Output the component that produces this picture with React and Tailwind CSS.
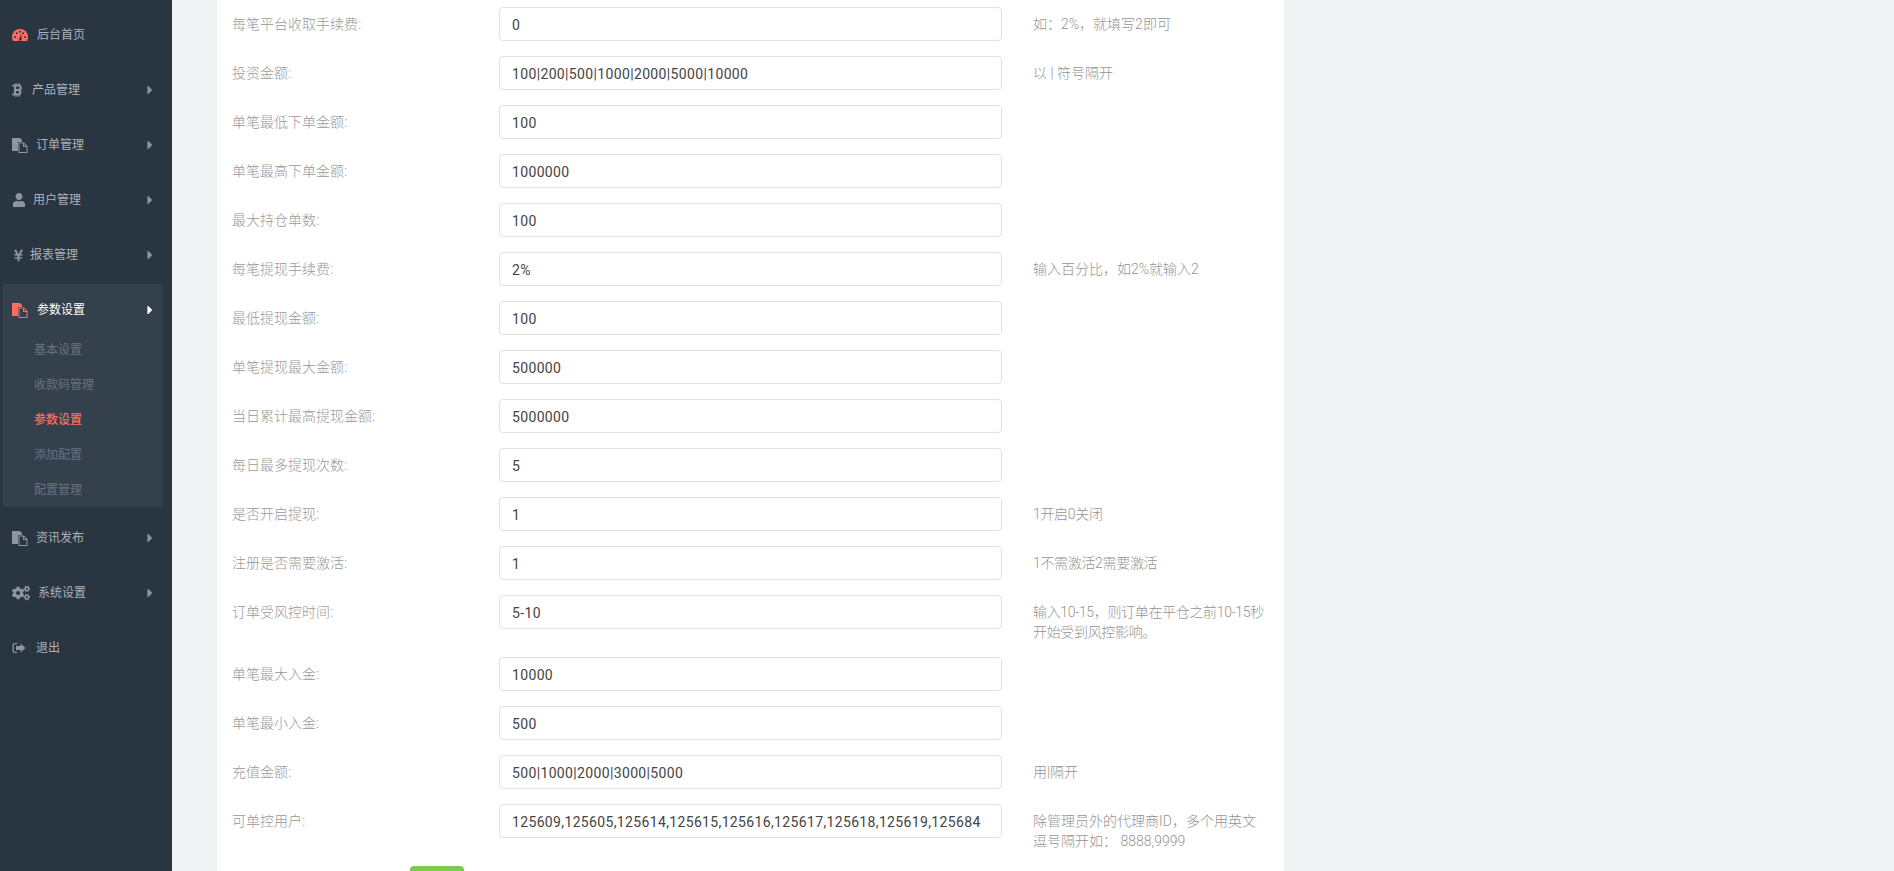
import { FaUser, FaYenSign, FaCogs, FaCaretRight } from "react-icons/fa";

const rows = [
  { label: "每笔平台收取手续费", value: "0", hint: "如：2%，就填写2即可" },
  { label: "投资金额", value: "100|200|500|1000|2000|5000|10000", hint: "以 | 符号隔开" },
  { label: "单笔最低下单金额", value: "100" },
  { label: "单笔最高下单金额", value: "1000000" },
  { label: "最大持仓单数", value: "100" },
  { label: "每笔提现手续费", value: "2%", hint: "输入百分比，如2%就输入2" },
  { label: "最低提现金额", value: "100" },
  { label: "单笔提现最大金额", value: "500000" },
  { label: "当日累计最高提现金额", value: "5000000" },
  { label: "每日最多提现次数", value: "5" },
  { label: "是否开启提现", value: "1", hint: "1开启0关闭", tight: true },
  { label: "注册是否需要激活", value: "1", hint: "1不需激活2需要激活", tight: true },
  { label: "订单受风控时间", value: "5-10", hint: "输入10-15，则订单在平仓之前10-15秒\n开始受到风控影响。", tight: true },
  { label: "单笔最大入金", value: "10000" },
  { label: "单笔最小入金", value: "500" },
  { label: "充值金额", value: "500|1000|2000|3000|5000", hint: "用|隔开" },
  {
    label: "可单控用户",
    value: "125609,125605,125614,125615,125616,125617,125618,125619,125684",
    hint: "除管理员外的代理商ID，多个用英文\n逗号隔开如： 8888,9999",
  },
];

function Gauge({ className }) {
  return (
    <svg viewBox="0 0 16 12" className={className} fill="currentColor">
      <path d="M8 0a8 8 0 0 0-8 8c0 1.500.4 2.900 1.100 4h13.800A8 8 0 0 0 16 8a8 8 0 0 0-8-8z" />
      <g fill="#2a3542">
        <circle cx="3" cy="8" r="1" />
        <circle cx="4.800" cy="4.200" r="1" />
        <circle cx="8" cy="2.800" r="1" />
        <circle cx="11.200" cy="4.200" r="1" />
        <circle cx="13" cy="8" r="1" />
        <path d="M7 10.500 9.200 5l.4 5.500a1.300 1.300 0 0 1-2.600 0z" />
      </g>
    </svg>
  );
}

function Bitcoin({ className }) {
  return (
    <svg viewBox="0 0 11 14" className={className} fill="none" stroke="currentColor">
      <path strokeWidth="2.200" d="M2.500 2.500h4a2.200 2.200 0 0 1 0 4.500h-4m4 0a2.300 2.300 0 0 1 0 4.500h-4M3 1.500v11" />
      <path strokeWidth="1.300" d="M4 0v2.500M7 0v2.500M4 11.500V14M7 11.500V14M0 2.500h2.500M0 11.500h2.500" />
    </svg>
  );
}

function Files({ className }) {
  return (
    <svg viewBox="0 0 16 15" className={className} fill="currentColor">
      <path d="M0 0h8l2 2v2H6v9H0z" />
      <path fillRule="evenodd" d="M6.500 4.500H12l3.500 3.500v7h-9zM7.500 5.500v8.500h7V9H11V5.500zM12 6v2h2z" />
    </svg>
  );
}

function SignOut({ className }) {
  return (
    <svg viewBox="0 0 14 12" className={className} fill="currentColor">
      <path d="M5 1H3a2.500 2.500 0 0 0-2.500 2.500v5A2.500 2.500 0 0 0 3 11h2V9.800H3A1.200 1.200 0 0 1 1.800 8.500v-5A1.200 1.200 0 0 1 3 2.200h2z" />
      <path d="M8.500 1.500 13.500 6l-5 4.500V8H4V4h4.500z" />
    </svg>
  );
}

function NavItem({ icon, label, gap, arrow = true, active = false, sub }) {
  return (
    <li className={active ? "mx-[3px] mb-[5px] h-[223px] w-[160px] rounded-[2px] bg-[#35404d]" : "mx-[3px] h-[55px] w-[160px]"}>
      <div className={`relative flex h-[52px] items-center pl-[9px] text-[12px] ${active ? "text-white" : "text-[#aeb2b7]"}`}>
        {icon}
        <span className={gap}>{label}</span>
        {arrow ? (
          <FaCaretRight className={`absolute left-[140px] top-1/2 -translate-y-1/2 text-[14px] ${active ? "text-white" : "text-[#8c9299]"}`} />
        ) : null}
      </div>
      {sub ? (
        <ul className="mt-[-4px] pl-[31px] text-[12px]">
          {sub.map((s) => (
            <li key={s} className={`flex h-[35px] items-center ${s === "参数设置" ? "font-medium text-[#ff6c60]" : "text-[#68727e]"}`}>
              {s}
            </li>
          ))}
        </ul>
      ) : null}
    </li>
  );
}

function Row({ label, value, hint, tight }) {
  return (
    <div className="mb-[15px] grid grid-cols-[236px_503px_236px] items-start gap-x-[31px]">
      <label className="flex h-[32px] items-center text-[14px] font-light text-[#999]">{label}:</label>
      <input
        readOnly
        value={value}
        className="h-[34px] w-full rounded-[4px] border border-[#e2e2e4] bg-white px-[12px] pt-[2px] font-['Roboto',sans-serif] text-[14px] tracking-[0.35px] text-[#444] outline-none"
      />
      <div className={`min-h-[34px] whitespace-pre pt-[7px] font-['Roboto','Noto_Sans_CJK_SC',sans-serif] text-[14px] font-light leading-[20px] text-[#949494] ${tight ? "tracking-[-0.33px]" : ""}`}>
        {hint}
      </div>
    </div>
  );
}

export default function App() {
  return (
    <div className="flex h-[871px] overflow-hidden bg-[#f1f2f4] font-['Open_Sans','Noto_Sans_CJK_SC',sans-serif]">
      <aside className="h-full w-[172px] shrink-0 bg-[#2a3542] pt-[9px]">
        <ul>
          <NavItem icon={<Gauge className="h-[12px] w-[16px] text-[#ff6c60]" />} label="后台首页" gap="ml-[9px]" arrow={false} />
          <NavItem icon={<Bitcoin className="h-[14px] w-[11px] text-[#8e959d]" />} label="产品管理" gap="ml-[9px]" />
          <NavItem icon={<Files className="h-[15px] w-[16px] text-[#8e959d]" />} label="订单管理" gap="ml-[8px]" />
          <NavItem icon={<FaUser className="text-[14px] text-[#8e959d]" />} label="用户管理" gap="ml-[7px]" />
          <NavItem icon={<FaYenSign className="text-[13px] text-[#8e959d]" />} label="报表管理" gap="ml-[5px]" />
          <NavItem
            active
            icon={<Files className="h-[15px] w-[16px] text-[#ff6c60]" />}
            label="参数设置"
            gap="ml-[9px]"
            sub={["基本设置", "收款码管理", "参数设置", "添加配置", "配置管理"]}
          />
          <NavItem icon={<Files className="h-[15px] w-[16px] text-[#8e959d]" />} label="资讯发布" gap="ml-[8px]" />
          <NavItem icon={<FaCogs className="text-[18px] text-[#8e959d]" />} label="系统设置" gap="ml-[8px]" />
          <NavItem icon={<SignOut className="h-[12px] w-[14px] text-[#8e959d]" />} label="退出" gap="ml-[10px]" arrow={false} />
        </ul>
      </aside>
      <main className="ml-[45px] h-full w-[1067px] shrink-0 bg-white pl-[15px] pt-[7px]">
        {rows.map((r) => (
          <Row key={r.label} {...r} />
        ))}
        <button className="ml-[178px] h-[34px] w-[54px] rounded-[4px] bg-[#78cd51]" />
      </main>
    </div>
  );
}
